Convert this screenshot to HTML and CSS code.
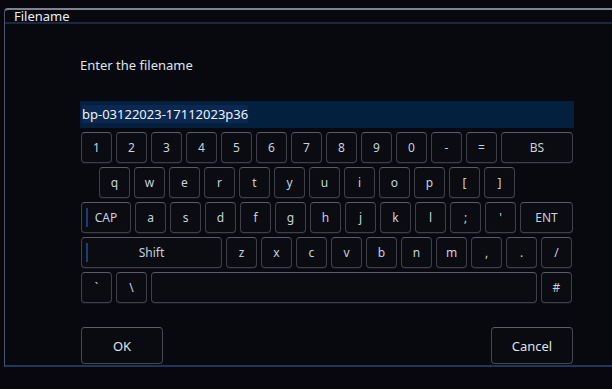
FILE: index.html
```html
<!DOCTYPE html>
<html lang="en">
<head>
    <meta charset="UTF-8">
    <title>Filename</title>
    <link rel="stylesheet" href="styles.css">
</head>
<body>
    <div class="dialog">
        <div class="dialog-title">Filename</div>

        <div class="dialog-body">
            <div class="prompt">Enter the filename</div>

            <div class="input"><span class="sel">bp-03122023-17112023p36</span></div>

            <div class="keyboard">
                <div class="row">
                    <div class="key">1</div>
                    <div class="key">2</div>
                    <div class="key">3</div>
                    <div class="key">4</div>
                    <div class="key">5</div>
                    <div class="key">6</div>
                    <div class="key">7</div>
                    <div class="key">8</div>
                    <div class="key">9</div>
                    <div class="key">0</div>
                    <div class="key">-</div>
                    <div class="key">=</div>
                    <div class="key key-bs">BS</div>
                </div>
                <div class="row row-indent">
                    <div class="key">q</div>
                    <div class="key">w</div>
                    <div class="key">e</div>
                    <div class="key">r</div>
                    <div class="key">t</div>
                    <div class="key">y</div>
                    <div class="key">u</div>
                    <div class="key">i</div>
                    <div class="key">o</div>
                    <div class="key">p</div>
                    <div class="key">[</div>
                    <div class="key">]</div>
                </div>
                <div class="row">
                    <div class="key key-cap toggle">CAP</div>
                    <div class="key">a</div>
                    <div class="key">s</div>
                    <div class="key">d</div>
                    <div class="key">f</div>
                    <div class="key">g</div>
                    <div class="key">h</div>
                    <div class="key">j</div>
                    <div class="key">k</div>
                    <div class="key">l</div>
                    <div class="key">;</div>
                    <div class="key">'</div>
                    <div class="key key-ent">ENT</div>
                </div>
                <div class="row">
                    <div class="key key-shift toggle">Shift</div>
                    <div class="key">z</div>
                    <div class="key">x</div>
                    <div class="key">c</div>
                    <div class="key">v</div>
                    <div class="key">b</div>
                    <div class="key">n</div>
                    <div class="key">m</div>
                    <div class="key">,</div>
                    <div class="key">.</div>
                    <div class="key">/</div>
                </div>
                <div class="row">
                    <div class="key">`</div>
                    <div class="key">\</div>
                    <div class="key key-space"></div>
                    <div class="key">#</div>
                </div>
            </div>

            <div class="actions">
                <div class="btn">OK</div>
                <div class="btn">Cancel</div>
            </div>
        </div>
    </div>
</body>
</html>
```

FILE: styles.css
```css
* {
    margin: 0;
    padding: 0;
    box-sizing: border-box;
}

body {
    font-family: 'Noto Sans', 'Open Sans', sans-serif;
    background: #07070d;
    color: #dfe6ef;
    width: 612px;
    height: 389px;
    overflow: hidden;
    padding: 8px 0 0 4px;
}

.dialog {
    width: 620px;
    height: 359px;
    background: #08080f;
    border-top: 2px solid #7d8392;
    border-left: 1px solid #4a5470;
    border-bottom: 2px solid #1f3560;
    border-top-left-radius: 4px;
    display: flex;
    flex-direction: column;
}

.dialog-title {
    height: 14px;
    padding-left: 9px;
    font-size: 13px;
    line-height: 13px;
    color: #e8edf4;
    border-bottom: 2px solid #1a2742;
}

.dialog-body {
    padding: 0 0 0 75px;
    display: flex;
    flex-direction: column;
}

.prompt {
    margin-top: 32px;
    font-size: 13px;
    line-height: 18px;
    color: #dfe5ee;
}

.input {
    margin-top: 27px;
    width: 494px;
    height: 27px;
    background: #03203f;
    padding: 3px 0 0 2px;
    font-size: 13px;
    line-height: 20px;
    color: #eef3fa;
}

.sel {
    background: #0a2850;
}

.keyboard {
    margin-top: 4px;
    margin-left: 1px;
    display: flex;
    flex-direction: column;
    gap: 4px;
}

.row {
    display: flex;
    gap: 4px;
}

.row-indent {
    padding-left: 18px;
}

.key {
    position: relative;
    width: 31px;
    height: 31px;
    border: 1px solid #3f4049;
    border-top-color: #5b5c65;
    border-radius: 4px;
    background: #0b0b12;
    box-shadow: 0 1px 0 #15151c;
    display: flex;
    align-items: center;
    justify-content: center;
    font-size: 12px;
    color: #c6d2de;
}

.key-bs {
    width: 72px;
}

.key-cap {
    width: 50px;
}

.key-ent {
    width: 53px;
}

.key-shift {
    width: 141px;
}

.key-space {
    width: 386px;
}

.toggle::before {
    content: '';
    position: absolute;
    left: 4px;
    top: 5px;
    bottom: 5px;
    width: 2px;
    background: #1d3a7a;
}

.actions {
    margin-top: 24px;
    margin-left: 1px;
    width: 492px;
    display: flex;
    justify-content: space-between;
}

.btn {
    width: 82px;
    height: 37px;
    border: 1px solid #47484f;
    border-top-color: #5d5e66;
    border-radius: 4px;
    background: #0a0a11;
    display: flex;
    align-items: center;
    justify-content: center;
    font-size: 13px;
    color: #dbe3ec;
}
```
